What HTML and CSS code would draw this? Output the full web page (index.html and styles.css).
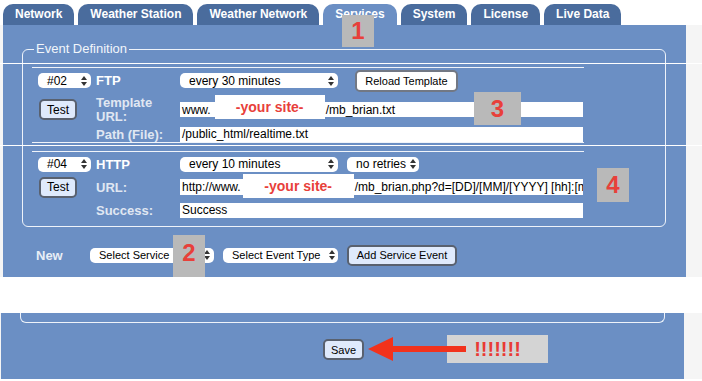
FILE: index.html
```html
<!DOCTYPE html>
<html>
<head>
    <meta charset="UTF-8">
    <title>Services</title>
    <link rel="stylesheet" href="styles.css">
</head>
<body>
    <nav class="tabs">
        <span class="tab">Network</span>
        <span class="tab">Weather Station</span>
        <span class="tab">Weather Network</span>
        <span class="tab active">Services</span>
        <span class="tab">System</span>
        <span class="tab">License</span>
        <span class="tab">Live Data</span>
    </nav>

    <div class="band">
        <div class="panel">
            <fieldset class="events">
                <legend>Event Definition</legend>

                <div class="event event-ftp">
                    <div class="line ftp-1">
                        <div class="cell-a">
                            <div class="sel sel-id">#02 <svg width="6" height="10" viewBox="0 0 6 10"><path d="M3 0L6 4H0Z M3 10L0 6H6Z"/></svg></div>
                        </div>
                        <div class="cell-b kind">FTP</div>
                        <div class="sel sel-when">every 30 minutes <svg width="6" height="10" viewBox="0 0 6 10"><path d="M3 0L6 4H0Z M3 10L0 6H6Z"/></svg></div>
                        <button class="btn btn-white btn-reload">Reload Template</button>
                    </div>
                    <div class="line ftp-2">
                        <div class="cell-a"><button class="btn btn-test">Test</button></div>
                        <div class="cell-b label label-two">Template<br>URL:</div>
                        <div class="input">www.<span class="mask mask-ftp">-your site-</span>/mb_brian.txt</div>
                    </div>
                    <div class="line ftp-3">
                        <div class="cell-a"></div>
                        <div class="cell-b label">Path (File):</div>
                        <div class="input">/public_html/realtime.txt</div>
                    </div>
                </div>

                <div class="event event-http">
                    <div class="line http-1">
                        <div class="cell-a">
                            <div class="sel sel-id">#04 <svg width="6" height="10" viewBox="0 0 6 10"><path d="M3 0L6 4H0Z M3 10L0 6H6Z"/></svg></div>
                        </div>
                        <div class="cell-b kind">HTTP</div>
                        <div class="sel sel-when">every 10 minutes <svg width="6" height="10" viewBox="0 0 6 10"><path d="M3 0L6 4H0Z M3 10L0 6H6Z"/></svg></div>
                        <div class="sel sel-retry">no retries <svg width="6" height="10" viewBox="0 0 6 10"><path d="M3 0L6 4H0Z M3 10L0 6H6Z"/></svg></div>
                    </div>
                    <div class="line http-2">
                        <div class="cell-a"><button class="btn btn-test">Test</button></div>
                        <div class="cell-b label">URL:</div>
                        <div class="input input-url">http://www.<span class="mask mask-http">-your site-</span>/mb_brian.php?d=[DD]/[MM]/[YYYY] [hh]:[mm]:[ss]</div>
                    </div>
                    <div class="line http-3">
                        <div class="cell-a"></div>
                        <div class="cell-b label">Success:</div>
                        <div class="input">Success</div>
                    </div>
                </div>
            </fieldset>

            <div class="new-row">
                <span class="new-label">New</span>
                <div class="sel sel-service">Select Service <svg width="6" height="10" viewBox="0 0 6 10"><path d="M3 0L6 4H0Z M3 10L0 6H6Z"/></svg></div>
                <div class="sel sel-type">Select Event Type <svg width="6" height="10" viewBox="0 0 6 10"><path d="M3 0L6 4H0Z M3 10L0 6H6Z"/></svg></div>
                <button class="btn btn-test btn-add">Add Service Event</button>
            </div>
        </div>
    </div>

    <div class="spacer"></div>

    <div class="band">
        <div class="panel panel-foot">
            <div class="fieldset-end"></div>
            <button class="btn btn-test btn-save">Save</button>
        </div>
    </div>

    <div class="note note-1">1</div>
    <div class="note note-2">2</div>
    <div class="note note-3">3</div>
    <div class="note note-4">4</div>
    <div class="note note-bang">!!!!!!!</div>
    <svg class="arrow" width="102" height="28" viewBox="0 0 102 28">
        <polygon points="2,14 27,2 27,26" fill="#f2321c"/>
        <rect x="25" y="11" width="75" height="6" fill="#f2321c"/>
    </svg>
</body>
</html>
```

FILE: styles.css
```css
body {
    margin: 0;
    height: 381px;
    overflow: hidden;
    background: #fff;
    font-family: "Liberation Sans", Arial, sans-serif;
    font-size: 12px;
    color: #000;
}

.tabs {
    display: flex;
    gap: 4px;
    padding: 4px 0 0 3px;
    height: 21px;
}

.tab {
    height: 21px;
    line-height: 21px;
    padding: 0 12px;
    background: #4a6c9d;
    color: #fff;
    font-weight: bold;
    font-size: 12px;
    border-radius: 10px 10px 0 0;
}

.tab.active {
    background: #6b8fc4;
}

.band {
    background: #f5f5f5;
}

.panel {
    width: 683px;
    margin-left: 3px;
    background: #6b8fc4;
    padding: 16px 0 11px;
    box-sizing: border-box;
}

.events {
    margin: 0 0 0 19px;
    width: 644px;
    min-width: 0;
    box-sizing: border-box;
    border: 1px solid #eef3fa;
    border-radius: 6px;
    padding: 10px 0 4px 9px;
}

.events legend {
    margin-left: 2px;
    padding: 0 2px;
    font-size: 13px;
    line-height: 16px;
    color: #f2f6fb;
}

.event {
    position: relative;
    width: 552px;
    border-top: 1px solid #f0f4fa;
}

.event-ftp {
    border-bottom: 1px solid #f0f4fa;
    margin-bottom: 8px;
}

/* seams of the pasted screenshot strips */
.event-ftp::before,
.event-ftp::after {
    content: "";
    position: absolute;
    left: -32px;
    right: -118px;
    height: 1px;
    background: #fff;
}

.event-ftp::before {
    top: -5px;
}

.event-ftp::after {
    bottom: -4px;
}

.line {
    display: flex;
    align-items: center;
}

.ftp-1 { height: 25px; }
.ftp-2 { height: 33px; }
.ftp-3 { height: 16px; }
.http-1 { height: 24px; }
.http-2 { height: 22px; }
.http-3 { height: 24px; }

.cell-a {
    width: 64px;
    padding-left: 6px;
    box-sizing: border-box;
    flex-shrink: 0;
}

.cell-b {
    width: 84px;
    flex-shrink: 0;
    font-weight: bold;
    font-size: 13px;
    line-height: 15px;
}

.label-two {
    line-height: 14px;
}

.kind {
    color: #fff;
}

.label {
    color: #e0e7f2;
}

.sel {
    display: flex;
    align-items: center;
    justify-content: space-between;
    height: 15px;
    padding: 0 4px 0 9px;
    box-sizing: border-box;
    background: #fff;
    border-radius: 5px;
    font-size: 12px;
    white-space: nowrap;
    flex-shrink: 0;
}

.sel svg {
    fill: #333;
}

.sel-id { width: 53px; }
.sel-when { width: 158px; }
.sel-retry { width: 72px; margin-left: 9px; padding-right: 3px; }
.sel-service { width: 124px; font-size: 11px; }
.sel-type { width: 115px; margin-left: 9px; padding-right: 3px; font-size: 11px; }

.btn {
    height: 21px;
    padding: 0;
    box-sizing: border-box;
    border: 2px solid #59616f;
    border-radius: 5px;
    background: #dfeafc;
    font-family: "Liberation Sans", Arial, sans-serif;
    font-size: 12px;
    color: #000;
    flex-shrink: 0;
}

.btn-white {
    background: #fff;
    border-color: #727884;
}

.btn-reload {
    width: 103px;
    height: 22px;
    margin-left: 17px;
    font-size: 11px;
}

.btn-test {
    width: 38px;
    margin-left: 1px;
}

.input {
    display: flex;
    align-items: center;
    width: 403px;
    height: 15px;
    padding-left: 2px;
    box-sizing: border-box;
    background: #fff;
    font-size: 12px;
    white-space: nowrap;
    overflow-x: clip;
    overflow-y: visible;
}

.input-url {
    height: 16px;
}

.mask {
    flex-shrink: 0;
    height: 24px;
    background: #fff;
    color: #e8403a;
    font-weight: bold;
    font-size: 14px;
    line-height: 24px;
    text-align: center;
}

.mask-ftp {
    width: 110px;
    margin: 0 1px 5px 4px;
}

.mask-http {
    width: 111px;
    margin: 0 1px 2px 2px;
}

.new-row {
    display: flex;
    align-items: center;
    height: 22px;
    margin-top: 17px;
    padding-left: 33px;
}

.new-label {
    width: 54px;
    flex-shrink: 0;
    font-weight: bold;
    font-size: 13px;
    color: #e8eef6;
}

.btn-add {
    width: 110px;
    margin-left: 9px;
    font-size: 11px;
}

.spacer {
    height: 36px;
}

.panel-foot {
    margin-left: 1px;
    padding: 0 0 19px;
}

.fieldset-end {
    width: 645px;
    height: 10px;
    margin-left: 19px;
    box-sizing: border-box;
    border: 1px solid #eef3fa;
    border-top: none;
    border-radius: 0 0 6px 6px;
}

.btn-save {
    display: block;
    width: 41px;
    margin: 16px 0 0 322px;
    font-size: 11px;
}

/* annotation marks pasted over the screenshot */
.note {
    position: absolute;
    display: flex;
    align-items: center;
    justify-content: center;
    background: #b9b9b9;
    color: #e8403a;
    font-weight: bold;
    font-size: 24px;
    line-height: 24px;
}

.note-1 { left: 342px; top: 15px; width: 32px; height: 32px; }
.note-2 { left: 173px; top: 235px; width: 32px; height: 42px; align-items: flex-start; padding-top: 6px; box-sizing: border-box; }
.note-3 { left: 474px; top: 92px; width: 47px; height: 33px; }
.note-4 { left: 597px; top: 168px; width: 32px; height: 34px; }

.note-bang {
    left: 447px;
    top: 335px;
    width: 101px;
    height: 28px;
    background: #d4d4d4;
    font-size: 20px;
    color: #e93a35;
}

.arrow {
    position: absolute;
    left: 366px;
    top: 335px;
}
```
